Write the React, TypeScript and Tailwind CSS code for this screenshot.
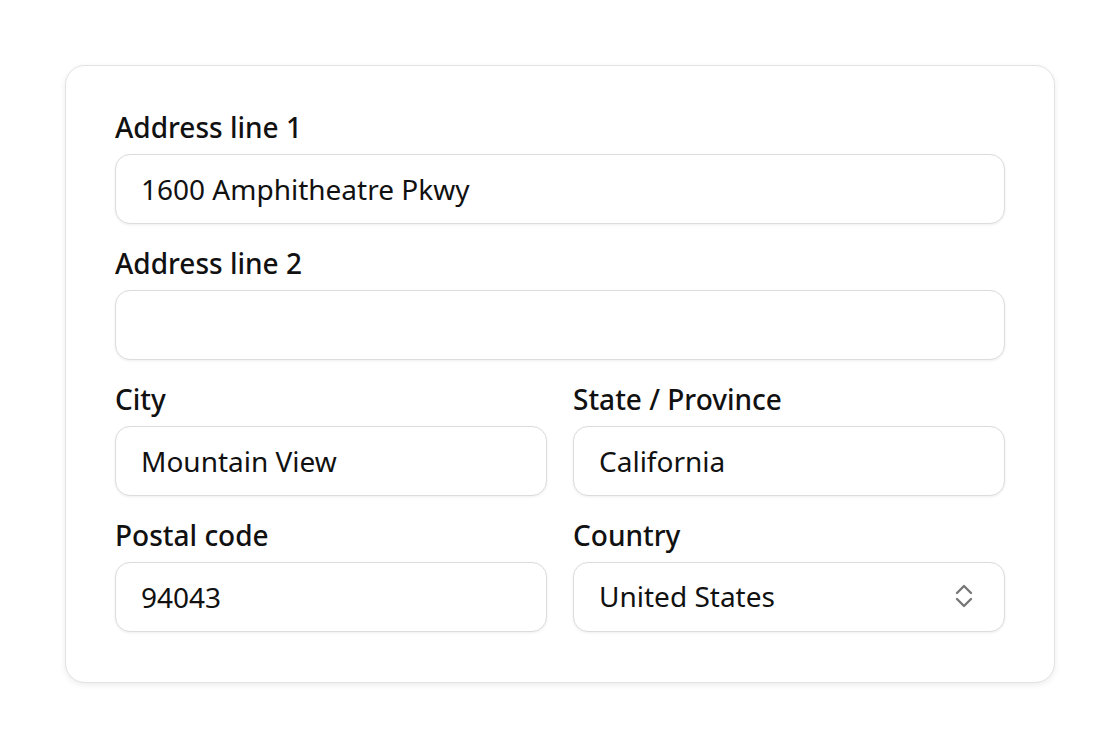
import React from 'react';

const inputCls =
  "w-full h-[70px] rounded-[15px] border border-[#dcdcdc] bg-white px-[25px] text-[28px] text-[#111] shadow-[0_1px_3px_rgba(0,0,0,0.07)] outline-none";

function Field({ label, value }: { label: string; value?: string }) {
  return (
    <label className="flex flex-col gap-[14px]">
      <span className="text-[28px] font-medium leading-[26px] text-[#111]">{label}</span>
      <input className={inputCls} defaultValue={value} />
    </label>
  );
}

export default function App() {
  return (
    <div className="min-h-screen bg-white pt-[65px] pl-[65px] font-['Noto_Sans',sans-serif]">
      <div className="w-[990px] rounded-[20px] border border-[#e2e2e2] bg-white px-[49px] pt-[48px] pb-[50px] shadow-[0_2px_6px_rgba(0,0,0,0.08)]">
        <div className="grid grid-cols-2 gap-x-[26px] gap-y-[26px]">
          <div className="col-span-2">
            <Field label="Address line 1" value="1600 Amphitheatre Pkwy" />
          </div>
          <div className="col-span-2">
            <Field label="Address line 2" />
          </div>
          <Field label="City" value="Mountain View" />
          <Field label="State / Province" value="California" />
          <Field label="Postal code" value="94043" />
          <label className="flex flex-col gap-[14px]">
            <span className="text-[28px] font-medium leading-[26px] text-[#111]">Country</span>
            <div className="relative">
              <div className="flex h-[70px] w-full items-center rounded-[15px] border border-[#dcdcdc] bg-white pl-[25px] pr-[30px] pb-[3px] text-[28px] text-[#111] shadow-[0_1px_3px_rgba(0,0,0,0.07)]">
                <span className="flex-1">United States</span>
              </div>
              <svg
                className="absolute right-[32px] top-[22px]"
                width="18"
                height="24"
                viewBox="0 0 18 24"
                fill="none"
                stroke="#777"
                strokeWidth="2.4"
                strokeLinecap="round"
                strokeLinejoin="round"
              >
                <path d="M2 9 L9 2 L16 9" />
                <path d="M2 15 L9 22 L16 15" />
              </svg>
            </div>
          </label>
        </div>
      </div>
    </div>
  );
}
